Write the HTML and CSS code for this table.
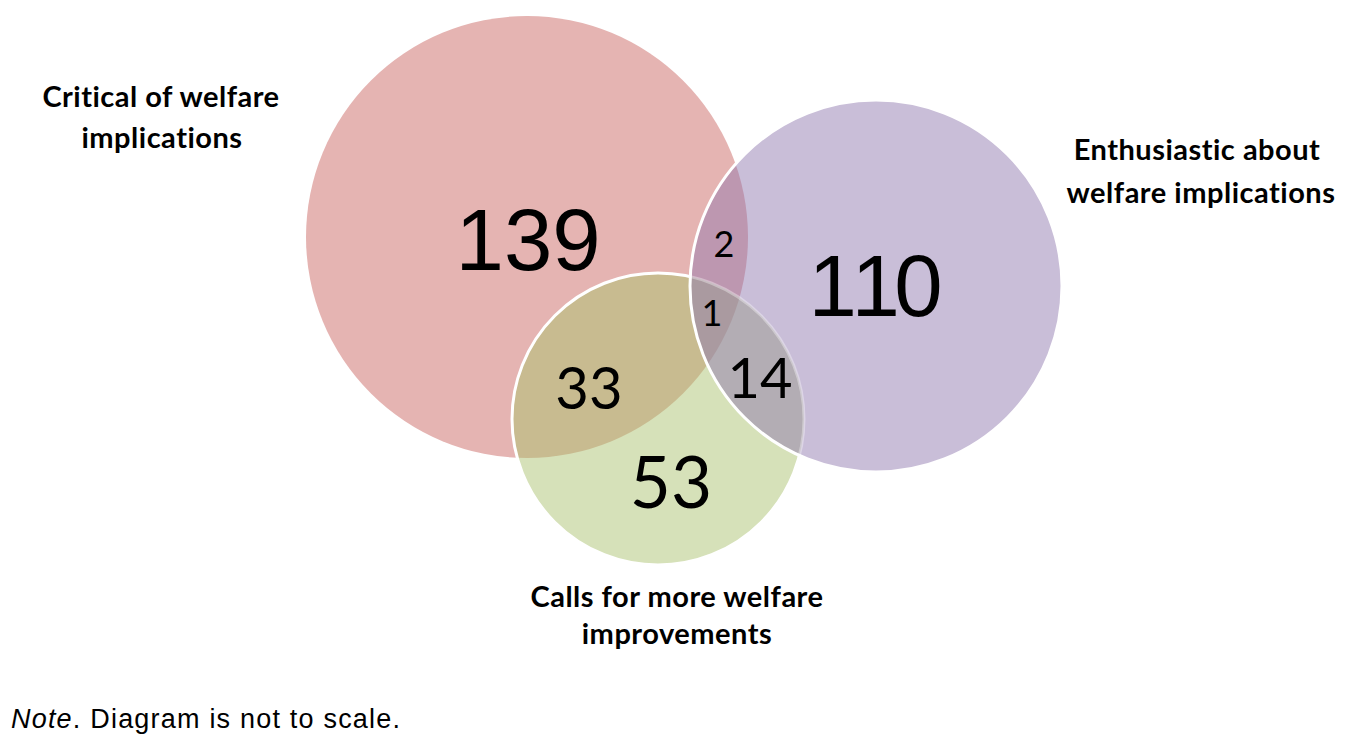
FILE: index.html
```html
<!DOCTYPE html>
<html lang="en">
<head>
<meta charset="utf-8">
<title>Venn diagram</title>
<link rel="stylesheet" href="styles.css">
</head>
<body>
<figure class="figure">
  <svg class="venn" width="1360" height="704" viewBox="0 0 1360 704" xmlns="http://www.w3.org/2000/svg">
    <defs>
      <clipPath id="clipR"><circle cx="527" cy="237" r="221"/></clipPath>
      <clipPath id="clipG"><circle cx="658" cy="419" r="146"/></clipPath>
      <clipPath id="clipP"><circle cx="876" cy="286" r="186"/></clipPath>
    </defs>
    <circle class="c-red" cx="527" cy="237" r="221"/>
    <circle class="c-green" cx="658" cy="419" r="146"/>
    <circle class="c-red-green" cx="658" cy="419" r="146" clip-path="url(#clipR)"/>
    <circle class="ring" cx="658" cy="419" r="146"/>
    <circle class="c-purple" cx="876" cy="286" r="186"/>
    <g clip-path="url(#clipP)">
      <circle class="c-red-purple" cx="527" cy="237" r="221"/>
      <circle class="c-green-purple" cx="658" cy="419" r="146"/>
      <g clip-path="url(#clipG)">
        <circle class="c-all" cx="527" cy="237" r="221"/>
      </g>
      <circle class="ring-faint" cx="658" cy="419" r="146"/>
    </g>
    <circle class="ring" cx="876" cy="286" r="186"/>

    <text class="big" x="455.5" y="270">139</text>
    <text class="big big110" x="808.5" y="316">110</text>
    <text class="num small" x="724" y="257">2</text>
    <text class="num small" x="712" y="326">1</text>
    <text class="num mid" x="589" y="409">33</text>
    <text class="num mid14" x="760" y="398">14</text>
    <text class="num large" x="671" y="508">53</text>

    <text class="label" x="161" y="107">Critical of welfare</text>
    <text class="label" x="162" y="148">implications</text>
    <text class="label" x="1197" y="160">Enthusiastic about</text>
    <text class="label" x="1201" y="203">welfare implications</text>
    <text class="label" x="677" y="607">Calls for more welfare</text>
    <text class="label" x="677" y="644">improvements</text>
  </svg>
</figure>
<p class="note"><em>Note</em>. Diagram is not to scale.</p>
</body>
</html>
```
FILE: styles.css
```css
html, body {
  margin: 0;
  padding: 0;
  background: #ffffff;
}
.figure {
  margin: 0;
}
.venn {
  display: block;
}
.c-red { fill: #e5b4b2; }
.c-green { fill: #d6e1b9; }
.c-red-green { fill: #c8bb90; }
.c-purple { fill: #c9bed8; }
.c-red-purple { fill: #bd97b0; }
.c-green-purple { fill: #b3adb4; }
.c-all { fill: #aa9aa0; }
.ring {
  fill: none;
  stroke: #ffffff;
  stroke-width: 3;
}
.ring-faint {
  fill: none;
  stroke: rgba(255, 255, 255, 0.35);
  stroke-width: 3;
}
.venn text {
  text-anchor: middle;
  fill: #000000;
}
.venn text.big {
  text-anchor: start;
  font-family: "Liberation Sans", Arial, sans-serif;
  font-size: 87px;
  font-kerning: none;
}
.venn text.big110 {
  letter-spacing: -5.5px;
}
.num {
  font-family: Lato, "Liberation Sans", sans-serif;
}
.small { font-size: 36px; }
.mid { font-size: 58px; }
.mid14 { font-size: 56px; }
.large { font-size: 71px; }
.label {
  font-family: Lato, "Liberation Sans", sans-serif;
  font-weight: 700;
  font-size: 29px;
  letter-spacing: 0.5px;
}
.note {
  margin: 0;
  padding-left: 11px;
  font-family: "Liberation Sans", Arial, sans-serif;
  font-size: 27px;
  letter-spacing: 1.2px;
  line-height: 30px;
  color: #000000;
}
```
